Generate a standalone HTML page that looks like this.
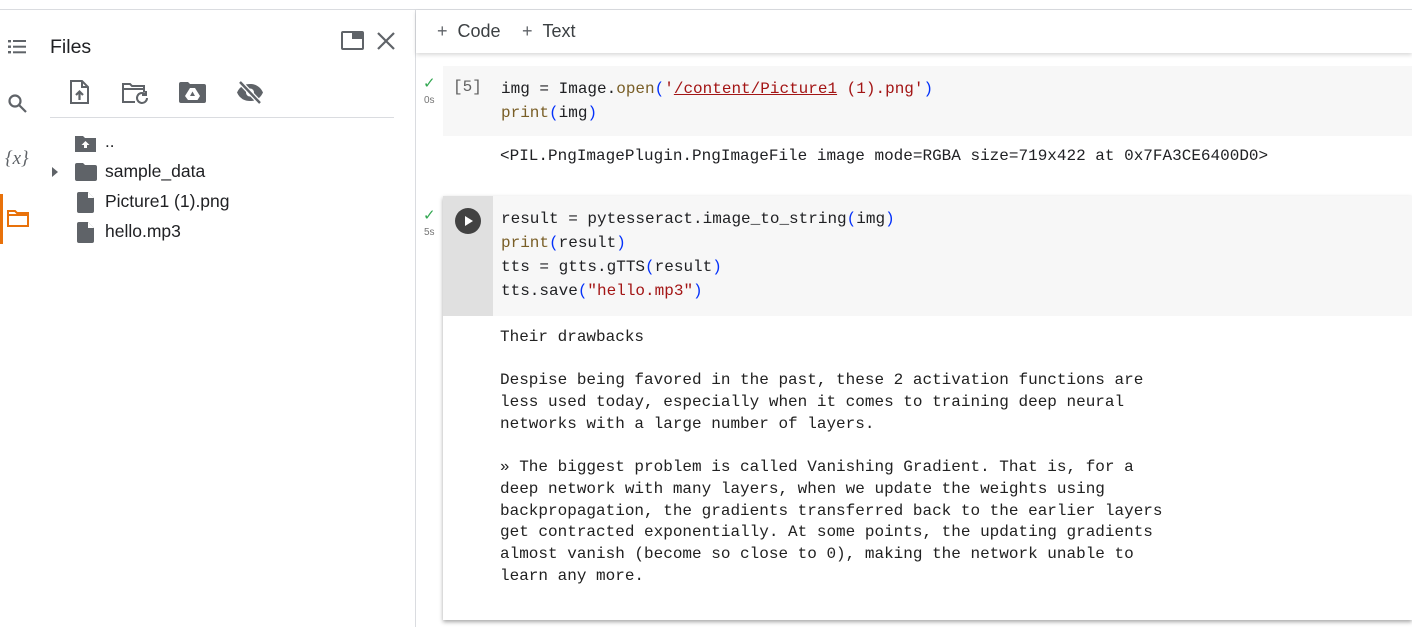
<!DOCTYPE html>
<html><head><style>
*{margin:0;padding:0;box-sizing:border-box}
body{width:1412px;height:627px;overflow:hidden;background:#fff;font-family:"Liberation Sans",sans-serif;position:relative;color:#202124}
.abs{position:absolute}
.mono{font-family:"Liberation Mono",monospace;font-size:16px;white-space:pre}
.k{color:#795e26}.p{color:#0431fa}.s{color:#a31515}
.files span{position:absolute;font-size:17.5px;color:#202124}
</style></head><body>
<div class="abs" style="left:0;top:9px;width:1412px;height:1px;background:#dadce0"></div>
<div class="abs" style="left:415px;top:10px;width:1px;height:617px;background:#dadce0"></div>
<svg class="abs" style="left:6px;top:37px" width="22" height="20" viewBox="0 0 22 20" fill="#5f6368"><rect x="2" y="3" width="3" height="2.4"/><rect x="7" y="3" width="13" height="2"/><rect x="2" y="8.5" width="3" height="2.4"/><rect x="7" y="8.7" width="13" height="2"/><rect x="2" y="14" width="3" height="2.4"/><rect x="7" y="14.3" width="13" height="2"/></svg>
<svg class="abs" style="left:7px;top:93px" width="22" height="22" viewBox="0 0 22 22" fill="none" stroke="#5f6368" stroke-width="2.2"><circle cx="8" cy="8" r="5.5"/><path d="M12 12l7 7"/></svg>
<div class="abs" style="left:5px;top:148px;font-family:'Liberation Serif',serif;font-style:italic;font-size:19px;color:#5f6368">{x}</div>
<div class="abs" style="left:0;top:194px;width:3px;height:50px;background:#e8710a"></div>
<svg class="abs" style="left:7px;top:209px" width="22" height="18" viewBox="0 0 22 18" fill="none" stroke="#e8710a" stroke-width="2"><path d="M1 2h7l2 2h11v13H1z"/><path d="M1 6h20"/></svg>
<div class="abs" style="left:50px;top:36px;font-size:19.5px">Files</div>
<svg class="abs" style="left:341px;top:31px" width="23" height="19" viewBox="0 0 23 19" fill="none" stroke="#5f6368" stroke-width="2"><rect x="1" y="1" width="21" height="17" rx="1"/><rect x="12" y="2" width="9" height="5" fill="#5f6368"/></svg>
<svg class="abs" style="left:376px;top:31px" width="20" height="20" viewBox="0 0 20 20" stroke="#5f6368" stroke-width="2.2"><path d="M2 2l16 16M18 2L2 18"/></svg>
<svg class="abs" style="left:69px;top:80px" width="22" height="25" viewBox="0 0 22 25" fill="none" stroke="#5f6368" stroke-width="2"><path d="M2 1h11l6 6v16H2z"/><path d="M13 1v6h6" /><path d="M10.5 20v-8M7 15l3.5-3.5L14 15" stroke-width="2.2"/></svg>
<svg class="abs" style="left:121px;top:82px" width="30" height="24" viewBox="0 0 30 24" fill="none" stroke="#5f6368" stroke-width="2"><path d="M14 20H2V2h7l2 2h12v6"/><path d="M2 7h21"/><path d="M26 16a5 5 0 1 1-2-4"/><path d="M25 9v4h-4" fill="#5f6368"/></svg>
<svg class="abs" style="left:179px;top:82px" width="27" height="21" viewBox="0 0 27 21"><path d="M0 2a2 2 0 0 1 2-2h7l2 2h14a2 2 0 0 1 2 2v15a2 2 0 0 1-2 2H2a2 2 0 0 1-2-2z" fill="#5f6368"/><path d="M11 6h5l5 8-2.5 4H9l-3-4z" fill="#fff"/><path d="M13.5 9.5L11 14h5z" fill="#5f6368"/></svg>
<svg class="abs" style="left:236px;top:80px" width="28" height="25" viewBox="0 0 28 25"><path d="M1 12.5C4 6 9 4 14 4s10 2 13 8.5C24 19 19 21 14 21S4 19 1 12.5z" fill="#5f6368"/><circle cx="14" cy="12.5" r="4" fill="#fff"/><path d="M4 2l20 21" stroke="#fff" stroke-width="5"/><path d="M4 2l20 21" stroke="#5f6368" stroke-width="2.4"/></svg>
<div class="abs" style="left:50px;top:117px;width:344px;height:1px;background:#dadce0"></div>
<svg class="abs" style="left:75px;top:135px" width="22" height="17" viewBox="0 0 22 17"><path d="M0 1h8l2 2h11v14H0z" fill="#5f6368"/><path d="M10.5 6l-4 4h2.5v3h3v-3h2.5z" fill="#fff"/></svg>
<div class="abs" style="left:105px;top:132px;font-size:17px;color:#202124">..</div>
<svg class="abs" style="left:51px;top:167px" width="8" height="10"><path d="M1 0l6 5-6 5z" fill="#5f6368"/></svg>
<svg class="abs" style="left:75px;top:163px" width="22" height="18" viewBox="0 0 22 18"><path d="M0 2a2 2 0 0 1 2-2h6l2 2h10a2 2 0 0 1 2 2v12a2 2 0 0 1-2 2H2a2 2 0 0 1-2-2z" fill="#5f6368"/></svg>
<svg class="abs" style="left:77px;top:192px" width="17" height="21" viewBox="0 0 17 21"><path d="M2 0h9l6 6v13a2 2 0 0 1-2 2H2a2 2 0 0 1-2-2V2a2 2 0 0 1 2-2z" fill="#5f6368"/><path d="M11 0v6h6z" fill="#fff"/></svg>
<svg class="abs" style="left:77px;top:222px" width="17" height="21" viewBox="0 0 17 21"><path d="M2 0h9l6 6v13a2 2 0 0 1-2 2H2a2 2 0 0 1-2-2V2a2 2 0 0 1 2-2z" fill="#5f6368"/><path d="M11 0v6h6z" fill="#fff"/></svg>
<div class="files"><span style="left:105px;top:161px">sample_data</span><span style="left:105px;top:191px">Picture1 (1).png</span><span style="left:105px;top:221px">hello.mp3</span></div>
<div class="abs" style="left:416px;top:10px;width:996px;height:43px;background:#fff;box-shadow:0 2px 4px rgba(0,0,0,.15)"></div>
<div class="abs" style="left:437px;top:21px;font-size:18px;color:#3c4043"><span style="color:#5f6368">+</span>&nbsp;&nbsp;Code</div>
<div class="abs" style="left:522px;top:21px;font-size:18px;color:#3c4043"><span style="color:#5f6368">+</span>&nbsp;&nbsp;Text</div>
<div class="abs" style="left:443px;top:66px;width:969px;height:70px;background:#f7f7f7"></div>
<div class="abs" style="left:423px;top:74px;color:#34a853;font-size:15px">✓</div>
<div class="abs" style="left:424px;top:95px;color:#757575;font-size:10px">0s</div>
<div class="abs mono" style="left:453px;top:78px;color:#616161">[5]</div>
<div class="abs mono" style="left:501px;top:77px;line-height:24px">img = Image.<span class="k">open</span><span class="p">(</span><span class="s">'<span style="text-decoration:underline">/content/Picture1</span> (1).png'</span><span class="p">)</span>
<span class="k">print</span><span class="p">(</span>img<span class="p">)</span></div>
<div class="abs mono" style="left:500px;top:147px">&lt;PIL.PngImagePlugin.PngImageFile image mode=RGBA size=719x422 at 0x7FA3CE6400D0&gt;</div>
<div class="abs" style="left:443px;top:196px;width:969px;height:424px;background:#fff;box-shadow:0 2px 4px rgba(0,0,0,.35)"></div>
<div class="abs" style="left:443px;top:196px;width:969px;height:120px;background:#f7f7f7"></div>
<div class="abs" style="left:443px;top:196px;width:50px;height:120px;background:#e0e0e0"></div>
<svg class="abs" style="left:455px;top:208px" width="26" height="26"><circle cx="13" cy="13" r="13" fill="#424242"/><path d="M10 8l8 5-8 5z" fill="#fff"/></svg>
<div class="abs" style="left:423px;top:206px;color:#34a853;font-size:15px">✓</div>
<div class="abs" style="left:424px;top:227px;color:#757575;font-size:10px">5s</div>
<div class="abs mono" style="left:501px;top:207px;line-height:24px">result = pytesseract.image_to_string<span class="p">(</span>img<span class="p">)</span>
<span class="k">print</span><span class="p">(</span>result<span class="p">)</span>
tts = gtts.gTTS<span class="p">(</span>result<span class="p">)</span>
tts.save<span class="p">(</span><span class="s">"hello.mp3"</span><span class="p">)</span></div>
<div class="abs mono" style="left:500px;top:327px;line-height:21.7px;color:#212121">Their drawbacks

Despise being favored in the past, these 2 activation functions are
less used today, especially when it comes to training deep neural
networks with a large number of layers.

» The biggest problem is called Vanishing Gradient. That is, for a
deep network with many layers, when we update the weights using
backpropagation, the gradients transferred back to the earlier layers
get contracted exponentially. At some points, the updating gradients
almost vanish (become so close to 0), making the network unable to
learn any more.</div>
</body></html>
